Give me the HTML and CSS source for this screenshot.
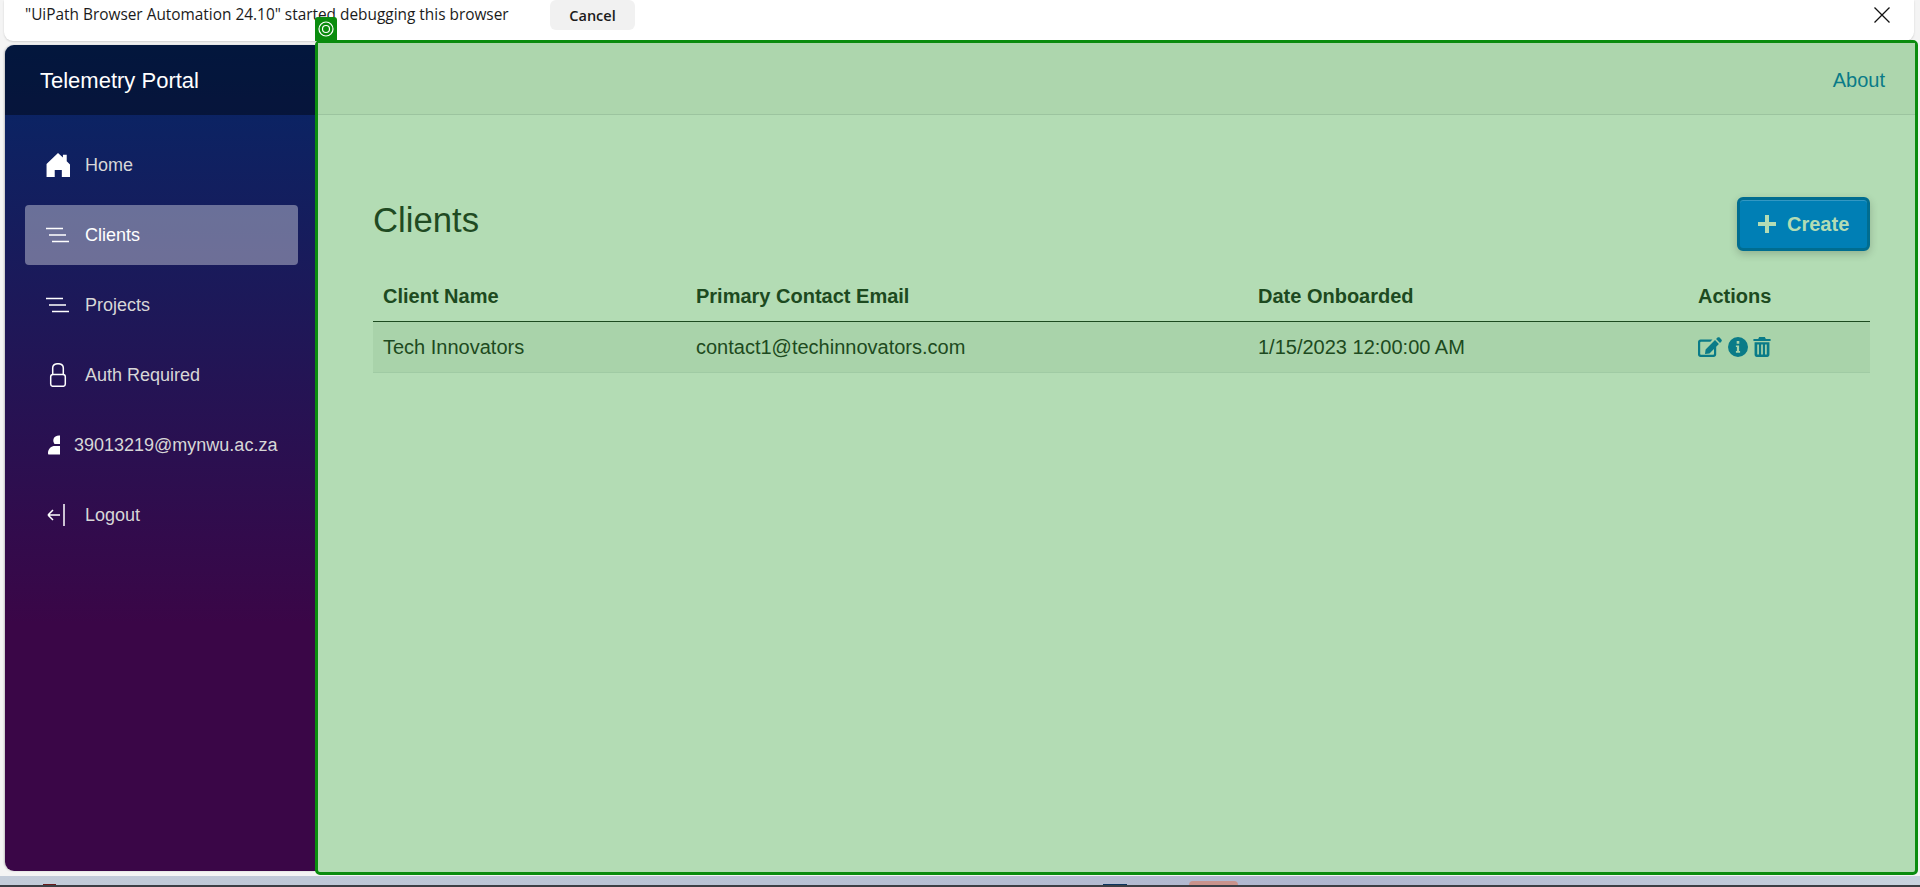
FILE: index.html
```html
<!DOCTYPE html>
<html>
<head>
<title>Clients</title>
<link rel="stylesheet" href="styles.css">
</head>
<body>

<div class="debug-bar">
  <span class="debug-text">"UiPath Browser Automation 24.10" started debugging this browser</span>
  <button class="debug-cancel">Cancel</button>
  <svg class="debug-close" viewBox="0 0 16 16"><path d="M0.5 0.5L15.5 15.5M15.5 0.5L0.5 15.5"/></svg>
</div>

<div class="shell">
  <div class="sidebar">
    <div class="brand">Telemetry Portal</div>
    <ul class="nav">
      <li><a href="#">
        <svg class="nav-icon" viewBox="0 0 22 22"><path fill="#fff" fill-rule="evenodd" d="M11 0L15.5 4.2V1.5H19V7.6L22 10.5V22H14.5V15.5H8V22H0.5V10L11 0Z"/></svg>
        Home</a></li>
      <li class="active"><a href="#">
        <svg class="nav-icon" viewBox="0 0 24 24"><path class="line-thin" d="M0 5.500H17M3 12H20M6 18.500H23"/></svg>
        Clients</a></li>
      <li><a href="#">
        <svg class="nav-icon" viewBox="0 0 24 24"><path class="line-thin" d="M0 5.500H17M3 12H20M6 18.500H23"/></svg>
        Projects</a></li>
      <li><a href="#">
        <svg class="nav-icon" viewBox="0 0 24 24"><path class="line" d="M6.700 11.500V5C6.700 2 9 0.700 12 0.700S17.300 2 17.300 5V11.500M7 11.500H17C18.500 11.500 19.300 12.300 19.300 13.800V21C19.300 22.500 18.500 23.300 17 23.300H7C5.500 23.300 4.700 22.500 4.700 21V13.800C4.700 12.300 5.500 11.500 7 11.500Z"/></svg>
        Auth Required</a></li>
      <li class="user"><a href="#">
        <svg class="user-icon" viewBox="0 0 12 20"><path fill="#fff" d="M11 0.500H12V9H6.500C5.500 7.500 5 6 5.500 4C6 2 8.500 0.500 11 0.500ZM5.500 11H12V19.500H1C0.300 19.500 0 19 0 18.200C0 15 2 12 5.500 11Z"/></svg>
        39013219@mynwu.ac.za</a></li>
      <li><a href="#">
        <svg class="nav-icon" viewBox="0 0 24 22"><path class="line" d="M18 0V22M2 11H14M2 11L7 6M2 11L7 16"/></svg>
        Logout</a></li>
    </ul>
  </div>

  <div class="main">
    <div class="target-tag">
      <svg viewBox="0 0 16 16"><circle cx="8" cy="8" r="7" fill="none" stroke="#fff" stroke-width="1.200"/><circle cx="8" cy="8" r="3.500" fill="none" stroke="#fff" stroke-width="1.200"/></svg>
    </div>
    <div class="top-row"><a href="#">About</a></div>
    <div class="content">
      <div class="title-row">
        <h1>Clients</h1>
        <button class="btn-create"><span class="plus"></span>Create</button>
      </div>
      <table class="clients">
        <colgroup>
          <col class="col-name"><col class="col-email"><col class="col-date"><col class="col-actions">
        </colgroup>
        <thead>
          <tr><th>Client Name</th><th>Primary Contact Email</th><th>Date Onboarded</th><th>Actions</th></tr>
        </thead>
        <tbody>
          <tr>
            <td>Tech Innovators</td>
            <td>contact1@techinnovators.com</td>
            <td>1/15/2023 12:00:00 AM</td>
            <td class="actions">
              <svg class="act-edit" viewBox="0 0 24 20"><path fill-rule="evenodd" d="M21.600 0.600L23.400 2.400C24 3 24 3.900 23.400 4.500L22 5.900L18.100 2L19.500 0.600C20.100 0 21 0 21.600 0.600ZM17 3.100L20.900 7L11.500 16.400L7 17L7.600 12.500L17 3.100ZM2.500 2.500H14.500L12.300 4.700H3.200C2.600 4.700 2.200 5.100 2.200 5.700V17.100C2.200 17.500 2.500 17.800 2.900 17.800H15C15.600 17.800 16 17.400 16 16.800V12L18.200 9.800V17.500C18.200 19 17 20 15.700 20H2.500C1.100 20 0 18.900 0 17.500V5C0 3.600 1.100 2.500 2.500 2.500Z"/></svg>
              <svg class="act-info" viewBox="0 0 20 20"><path fill-rule="evenodd" d="M10 0A10 10 0 1 1 10 20A10 10 0 0 1 10 0ZM8.700 3.900V6.700H11.300V3.900H8.700ZM7.900 8.400V10H8.900V14H7.900V15.700H12.100V14H11.100V8.400H7.900Z"/></svg>
              <svg class="act-trash" viewBox="0 0 18 21"><path fill-rule="evenodd" d="M6 0H12L13 2H18V4.200H0V2H5L6 0ZM1.200 5.500H16.800V18.500C16.800 20 15.800 21 14.500 21H3.500C2.200 21 1.200 20 1.200 18.500V5.500ZM4 8V18.500H5.800V8H4ZM8.100 8V18.500H9.900V8H8.100ZM12.200 8V18.500H14V8H12.200Z"/></svg>
            </td>
          </tr>
        </tbody>
      </table>
    </div>
  </div>
</div>

<div class="desktop-strip">
  <span class="task-red"></span>
  <span class="task-blue"></span>
  <span class="task-pink"></span>
</div>

</body>
</html>
```

FILE: styles.css
```css
html, body {
  margin: 0;
  height: 887px;
  overflow: hidden;
}

body {
  display: flex;
  flex-direction: column;
  background-color: #f4f4f4;
  font-family: "Liberation Sans", Arial, sans-serif;
}

.debug-bar {
  display: flex;
  align-items: flex-start;
  box-sizing: border-box;
  height: 41px;
  margin: 0 6px 0 4px;
  padding-left: 21px;
  background-color: #fff;
  border-radius: 0 0 9px 9px;
  box-shadow: 0 1px 2px rgba(0, 0, 0, 0.15);
}

.debug-text {
  width: 525px;
  padding-top: 5px;
  font-family: "Open Sans", sans-serif;
  font-size: 15.400px;
  line-height: 20px;
  color: #1b1b1b;
  white-space: nowrap;
}

.debug-cancel {
  width: 85px;
  height: 30px;
  padding: 0;
  border: 0;
  border-radius: 6px;
  background-color: #f1f1f1;
  font-family: "Open Sans", sans-serif;
  font-size: 14.500px;
  font-weight: 600;
  color: #1b1b1b;
}

.debug-close {
  width: 16px;
  height: 16px;
  margin: 7px 0 0 1239px;
  fill: none;
  stroke: #111;
  stroke-width: 1.300;
}

.shell {
  display: flex;
  height: 834px;
  margin-top: 0;
}

.sidebar {
  width: 311px;
  margin: 4px 0 4px 5px;
  border-radius: 9px 0 0 9px;
  overflow: hidden;
  background-image: linear-gradient(180deg, #052767 0%, #3a0647 70%);
  box-shadow: -1px 0 2px rgba(0, 0, 0, 0.2);
}

.brand {
  box-sizing: border-box;
  height: 70px;
  padding-left: 35px;
  background-color: rgba(0, 0, 0, 0.4);
  font-size: 22px;
  line-height: 72px;
  color: #fff;
}

.nav {
  list-style-type: none;
  margin: 0;
  padding: 20px 0 0 20px;
}

.nav li {
  width: 273px;
  height: 60px;
  margin-bottom: 10px;
}

.nav a {
  display: flex;
  align-items: center;
  height: 100%;
  padding-left: 21px;
  border-radius: 4px;
  color: #d7d7d7;
  font-size: 18px;
  text-decoration: none;
}

.nav .active a {
  background-color: rgba(255, 255, 255, 0.37);
  color: #fff;
}

.nav-icon {
  flex: none;
  width: 24px;
  height: 24px;
  margin-right: 15px;
}

.line {
  fill: none;
  stroke: #fff;
  stroke-width: 1.500;
}

.line-thin {
  fill: none;
  stroke: #fff;
  stroke-width: 1.300;
}

.nav .user a {
  padding-left: 23px;
}

.user-icon {
  flex: none;
  width: 12px;
  height: 20px;
  margin-right: 14px;
}

.main {
  position: relative;
  flex: 1;
  margin: -1px 2px 0 -1px;
  border: 3px solid #0a8c0e;
  border-radius: 5px;
  background-color: #b3dcb4;
}

.target-tag {
  position: absolute;
  top: -26px;
  left: -3px;
  display: flex;
  align-items: center;
  justify-content: center;
  width: 22px;
  height: 24px;
  border-radius: 3px 3px 0 0;
  background-color: #0a8c0e;
}

.target-tag svg {
  width: 16px;
  height: 16px;
}

.top-row {
  display: flex;
  align-items: center;
  justify-content: flex-end;
  box-sizing: border-box;
  height: 72px;
  padding: 4px 30px 0 0;
  background-color: #add6ad;
  border-bottom: 1px solid #9cc49f;
}

.top-row a {
  color: #0a7b88;
  font-size: 20px;
  text-decoration: none;
}

.content {
  padding: 80px 45px 0 55px;
}

.title-row {
  display: flex;
  justify-content: space-between;
  align-items: flex-start;
  height: 76px;
}

h1 {
  margin: 0;
  padding-top: 3px;
  font-size: 34.700px;
  font-weight: 400;
  line-height: 44px;
  color: #1f4a22;
}

.btn-create {
  display: flex;
  align-items: center;
  box-sizing: border-box;
  width: 133px;
  height: 54px;
  margin-top: 2px;
  padding: 0 0 0 18px;
  border: 3px solid #006d90;
  border-radius: 6px;
  background-color: #007fb5;
  box-shadow: 0 3px 8px rgba(0, 0, 0, 0.2), inset 0 1px 0 rgba(255, 255, 255, 0.2);
  font-family: "Liberation Sans", Arial, sans-serif;
  font-size: 20px;
  font-weight: 700;
  color: #b3dcb4;
}

.plus {
  width: 18px;
  height: 18px;
  margin-right: 11px;
  background-image: linear-gradient(#b3dcb4, #b3dcb4), linear-gradient(#b3dcb4, #b3dcb4);
  background-size: 100% 4px, 4px 100%;
  background-position: center;
  background-repeat: no-repeat;
}

.clients {
  width: 100%;
  table-layout: fixed;
  border-collapse: collapse;
  color: #1d4a20;
  font-size: 20px;
}

.col-name { width: 313px; }
.col-email { width: 562px; }
.col-date { width: 440px; }

.clients th {
  height: 50px;
  padding: 0 0 0 10px;
  text-align: left;
  border-bottom: 1px solid #1d4a20;
}

.clients td {
  height: 50px;
  padding: 0 0 0 10px;
  background-color: #a9d3aa;
  border-bottom: 1px solid #a0cba4;
}

.actions svg {
  height: 20px;
  margin-top: -2px;
  fill: #0a7b88;
  vertical-align: middle;
}

.act-edit { width: 24px; }
.act-info { width: 20px; }
.act-trash { width: 18px; height: 21px; }

.desktop-strip {
  position: relative;
  flex: 1;
  margin-top: 1px;
  background-image: linear-gradient(90deg, #c3ccd9 0%, #b9c2d4 40%, #b0b6cf 70%, #c9d3de 100%);
  border-bottom: 2px solid #3d3f45;
}

.task-red, .task-blue, .task-pink {
  position: absolute;
}

.task-red {
  bottom: 0;
  left: 43px;
  width: 13px;
  height: 1px;
  background-color: #6b1b1b;
}

.task-blue {
  bottom: 0;
  left: 1103px;
  width: 24px;
  height: 1px;
  background-color: #0d3560;
}

.task-pink {
  bottom: 0;
  left: 1189px;
  width: 49px;
  height: 4px;
  border-radius: 4px 4px 0 0;
  background-color: #c9938c;
}
```
